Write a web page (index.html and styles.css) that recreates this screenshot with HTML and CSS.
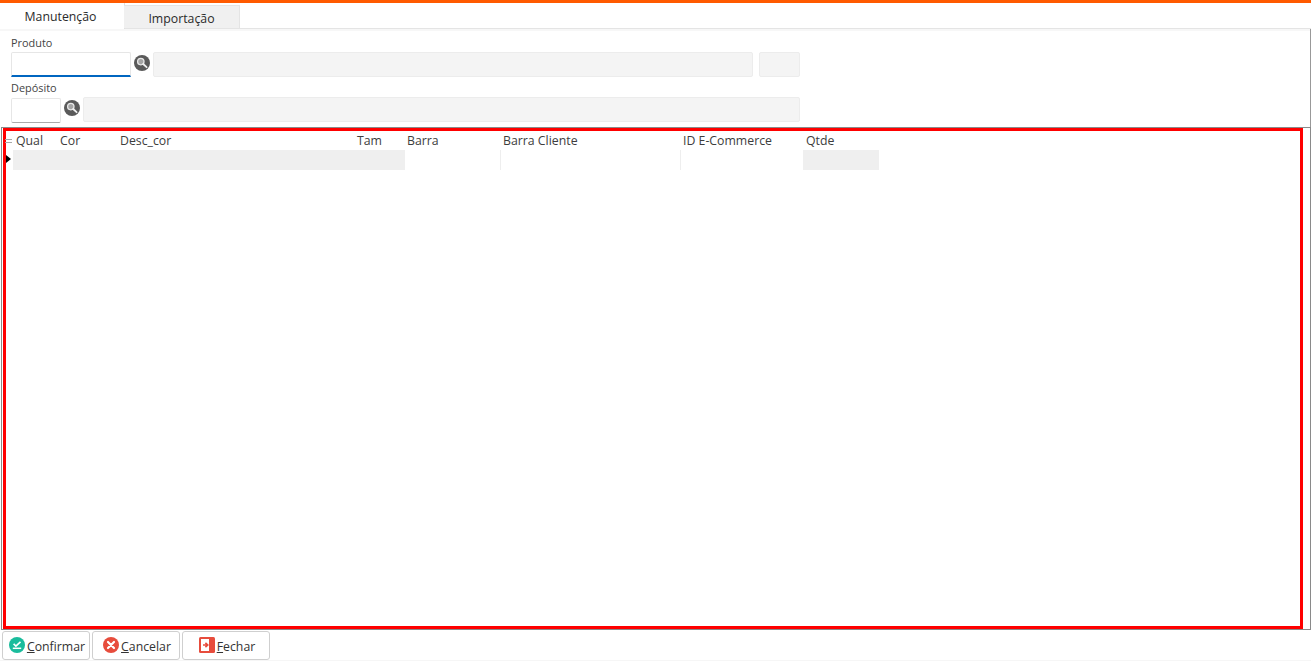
FILE: index.html
```html
<!DOCTYPE html>
<html lang="pt">
<head>
<meta charset="utf-8">
<title>Manutenção</title>
<link rel="stylesheet" href="styles.css">
</head>
<body>
<svg class="defs" width="0" height="0" aria-hidden="true">
  <symbol id="lupa" viewBox="0 0 16 16">
    <circle cx="8" cy="8" r="8" fill="#5a5a5a"/>
    <circle cx="6.8" cy="6.6" r="3.2" fill="#a5a5a5" stroke="#e8e8e8" stroke-width="1.3"/>
    <path d="M9.2 9l3.4 3.2" stroke="#f0f0f0" stroke-width="1.8" stroke-linecap="round"/>
  </symbol>
</svg>
<div class="top-bar"></div>
<nav class="tabs">
  <div class="tab tab-active">Manutenção</div>
  <div class="tab tab-idle">Importação</div>
</nav>
<section class="form">
  <div class="label">Produto</div>
  <div class="row row-product">
    <div class="input input-product"></div>
    <svg class="lupa"><use href="#lupa"/></svg>
    <div class="field field-desc"></div>
    <div class="field field-small"></div>
  </div>
  <div class="label label-second">Depósito</div>
  <div class="row row-deposit">
    <div class="input input-deposit"></div>
    <svg class="lupa"><use href="#lupa"/></svg>
    <div class="field field-deposit"></div>
  </div>
</section>
<section class="frame">
  <div class="grid-box">
    <div class="grid-head">
      <div class="indicator"><span></span><span></span></div>
      <div>Qual</div><div>Cor</div><div>Desc_cor</div><div>Tam</div><div>Barra</div><div>Barra Cliente</div><div>ID E-Commerce</div><div>Qtde</div>
    </div>
    <div class="grid-row">
      <div class="arrow-cell"><i class="arrow"></i></div>
      <div class="cell-fill"></div>
      <div class="cell-line cell-barra"></div>
      <div class="cell-line cell-cliente"></div>
      <div class="cell-ecom"></div>
      <div class="cell-qtde"></div>
    </div>
  </div>
</section>
<footer class="actions">
  <button class="btn btn-confirm" type="button">
    <svg class="btn-icon" viewBox="0 0 16 16"><circle cx="8" cy="8" r="8" fill="#1abc9c"/><path d="M4.6 6.9l2.3 2.2 4.6-4.2" fill="none" stroke="#fff" stroke-width="1.7"/><path d="M3.8 11.3h8.4" stroke="#fff" stroke-width="1.5"/></svg>
    <span><u>C</u>onfirmar</span>
  </button>
  <button class="btn btn-cancel" type="button">
    <svg class="btn-icon" viewBox="0 0 16 16"><circle cx="8" cy="8" r="8" fill="#e74c3c"/><path d="M5 5l6 6M11 5l-6 6" stroke="#fff" stroke-width="2.2" stroke-linecap="round"/></svg>
    <span><u>C</u>ancelar</span>
  </button>
  <button class="btn btn-close" type="button">
    <svg class="btn-icon" viewBox="0 0 16 16"><rect width="16" height="16" rx="1.5" fill="#e74c3c"/><rect x="2" y="2" width="8" height="12" fill="#fff"/><path d="M4 8h4M6.4 5.8L8.8 8l-2.4 2.2" fill="none" stroke="#e74c3c" stroke-width="1.6"/></svg>
    <span><u>F</u>echar</span>
  </button>
</footer>
</body>
</html>
```
FILE: styles.css
```css
* { box-sizing: border-box; }
html, body { margin: 0; height: 100%; }
body {
  background: #fff;
  color: #3a3a3a;
  font-family: "Open Sans", "Noto Sans", sans-serif;
  font-size: 12.3px;
  overflow: hidden;
}
.defs { display: block; height: 0; }
.top-bar { height: 3px; background: #ff5a00; }

.tabs {
  display: flex;
  align-items: flex-end;
  height: 26px;
  border-bottom: 1px solid #e4e4e4;
}
.tab { color: #2b2b2b; text-align: center; }
.tab-active {
  width: 124px;
  height: 26px;
  margin-bottom: -1px;
  padding: 5px 3px 0 0;
  background: #fff;
  box-shadow: 1px 0 0 #e0e0e0;
}
.tab-idle {
  width: 116px;
  height: 23px;
  padding-top: 4px;
  background: #f0f0f0;
  border: 1px solid #e4e4e4;
  border-bottom: 0;
  border-left: 0;
}

.form {
  height: 98px;
  padding: 7px 0 0 11px;
  border-right: 1px solid #999;
  background: linear-gradient(#f7f7f7 0, #f7f7f7 2px, #fff 2px);
}
.label { height: 16px; font-size: 10.9px; line-height: 13px; color: #444; }
.label-second { margin-top: 3px; height: 16px; }
.row { display: flex; align-items: flex-start; }
.row-product { height: 26px; }
.row-deposit { height: 26px; }
.input { background: #fff; border: 1px solid #e6e6e6; border-radius: 2px; }
.input-product { width: 120px; height: 25px; border-bottom: 2px solid #0066c0; border-radius: 2px 2px 0 0; }
.input-deposit { width: 50px; height: 25px; margin-top: 1px; border-bottom: 1px solid #aaa; }
.lupa { flex: none; width: 16px; height: 16px; margin: 3px 3px 0 3px; }
.field { height: 25px; background: #f4f4f4; border: 1px solid #ececec; border-radius: 2px; }
.field-desc { width: 600px; }
.field-small { width: 41px; margin-left: 6px; }
.field-deposit { width: 717px; }

.frame {
  height: 503px;
  margin-left: 1px;
  padding: 0 7px 0 1px;
  border: 1px solid #8a8a8a;
}
.grid-box {
  height: 501px;
  margin-bottom: -1px;
  border: 3px solid #f00;
}
.grid-head {
  display: grid;
  grid-template-columns: 10px 44px 60px 237px 50px 96px 180px 123px 70px;
  height: 19px;
  align-items: center;
  color: #3d3d3d;
}
.indicator { display: flex; flex-direction: column; gap: 2px; width: 7px; margin-left: -1px; }
.indicator span { display: block; height: 1px; background: #aaa; }
.grid-row {
  display: grid;
  grid-template-columns: 7px 392px 95px 180px 123px 76px;
  height: 20px;
}
.arrow-cell { display: flex; align-items: center; }
.arrow {
  display: block;
  margin-top: -2px;
  border-left: 5px solid #000;
  border-top: 4px solid transparent;
  border-bottom: 4px solid transparent;
}
.cell-fill, .cell-qtde { background: #efefef; }
.cell-line, .cell-ecom { background: #fff; }
.cell-cliente, .cell-ecom { border-left: 1px solid #eee; }

.actions {
  display: flex;
  gap: 2px;
  height: 31px;
  padding: 1px 0 1px 2px;
  border-bottom: 1px solid #f6f6f6;
}
.btn {
  display: flex;
  align-items: center;
  justify-content: center;
  gap: 2px;
  width: 88px;
  height: 29px;
  padding: 0 0 0 2px;
  background: #fff;
  border: 1px solid #cfcfcf;
  border-radius: 3px;
  color: #333;
  font: inherit;
}
.btn-icon { flex: none; width: 16px; height: 16px; margin-top: -2px; }
.btn span { padding-top: 2px; }
```
